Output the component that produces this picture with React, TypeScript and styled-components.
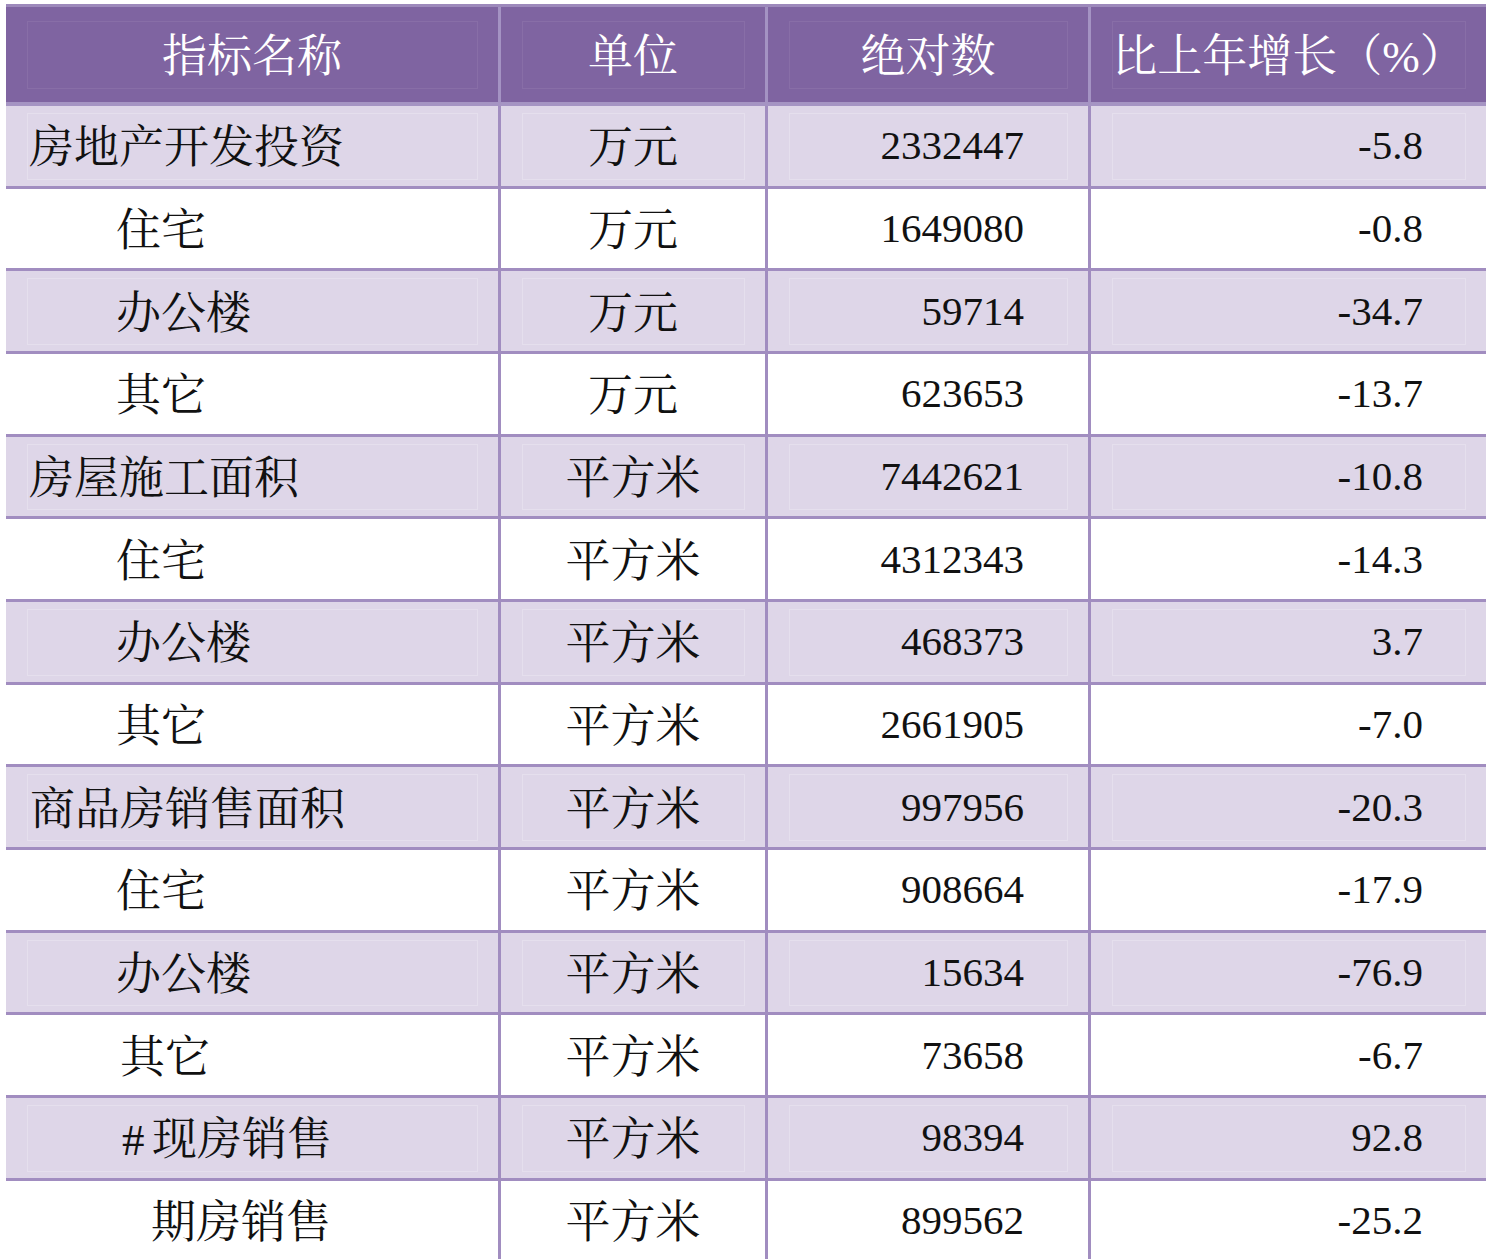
import React from "react";
import styled, { createGlobalStyle, css } from "styled-components";

const GlobalStyle = createGlobalStyle`
  html, body {
    margin: 0;
    padding: 0;
    background: #ffffff;
    overflow: hidden;
  }
  body {
    font-family: "Liberation Serif", "Noto Serif CJK SC", "Noto Sans CJK SC", serif;
    color: #111;
  }
`;

const COLS = "495px 267px 323px 1fr";

const Page = styled.div`
  padding: 4px 0 0 6px;
`;

const Table = styled.div`
  display: flex;
  flex-direction: column;
  width: 1480px;
`;

const HeaderRow = styled.div`
  display: grid;
  grid-template-columns: ${COLS};
  height: 102px;
  box-sizing: border-box;
  border-top: 3px solid #9d89bb;
  border-bottom: 4px solid #a594c3;
  background: #7f64a1;
`;

const BodyRow = styled.div<{ $shaded: boolean }>`
  display: grid;
  grid-template-columns: ${COLS};
  height: 82.67px;
  box-sizing: border-box;
  border-bottom: 3px solid #a18dc0;
  background: ${(p) => (p.$shaded ? "#ded6e8" : "#ffffff")};
`;

type Align = "left" | "center" | "right";

const Cell = styled.div<{ $align: Align; $indent?: number; $pad?: number; $header?: boolean; $outline?: boolean }>`
  position: relative;
  display: flex;
  align-items: center;
  justify-content: ${(p) =>
    p.$align === "left" ? "flex-start" : p.$align === "right" ? "flex-end" : "center"};
  padding-left: ${(p) => (p.$align === "left" ? `${p.$indent ?? 0}px` : "0")};
  padding-right: ${(p) => (p.$align === "right" ? `${p.$pad ?? 0}px` : "0")};
  box-sizing: border-box;
  border-right: 3px solid ${(p) => (p.$header ? "#a493c3" : "#a18dc0")};
  line-height: 1;
  white-space: nowrap;
  &:last-child {
    border-right: none;
  }
  ${(p) =>
    p.$outline &&
    css`
      &::after {
        content: "";
        position: absolute;
        top: ${p.$header ? 14 : 7}px;
        bottom: ${p.$header ? 13 : 6}px;
        left: 21px;
        right: 20px;
        border: 1px solid rgba(255, 255, 255, ${p.$header ? 0.07 : 0.22});
        pointer-events: none;
      }
    `}
`;

const HeadText = styled.span`
  display: inline-block;
  padding-top: 6px;
  color: #ffffff;
  font-size: 45px;
  position: relative;
  z-index: 1;
`;

const CjkText = styled.span`
  display: inline-block;
  padding-top: 6px;
  color: #111;
  font-size: 45px;
  position: relative;
  z-index: 1;
`;

const Hash = styled.span`
  display: inline-block;
  width: 30px;
`;

const NumText = styled.span`
  color: #111;
  font-size: 41px;
  position: relative;
  z-index: 1;
`;

type Row = { name: string; hash?: boolean; indent: number; unit: string; abs: string; growth: string };

const rows: Row[] = [
  { name: "房地产开发投资", indent: 23, unit: "万元", abs: "2332447", growth: "-5.8" },
  { name: "住宅", indent: 110, unit: "万元", abs: "1649080", growth: "-0.8" },
  { name: "办公楼", indent: 110, unit: "万元", abs: "59714", growth: "-34.7" },
  { name: "其它", indent: 110, unit: "万元", abs: "623653", growth: "-13.7" },
  { name: "房屋施工面积", indent: 23, unit: "平方米", abs: "7442621", growth: "-10.8" },
  { name: "住宅", indent: 110, unit: "平方米", abs: "4312343", growth: "-14.3" },
  { name: "办公楼", indent: 110, unit: "平方米", abs: "468373", growth: "3.7" },
  { name: "其它", indent: 110, unit: "平方米", abs: "2661905", growth: "-7.0" },
  { name: "商品房销售面积", indent: 24, unit: "平方米", abs: "997956", growth: "-20.3" },
  { name: "住宅", indent: 110, unit: "平方米", abs: "908664", growth: "-17.9" },
  { name: "办公楼", indent: 110, unit: "平方米", abs: "15634", growth: "-76.9" },
  { name: "其它", indent: 114, unit: "平方米", abs: "73658", growth: "-6.7" },
  { name: "现房销售", hash: true, indent: 116, unit: "平方米", abs: "98394", growth: "92.8" },
  { name: "期房销售", indent: 145, unit: "平方米", abs: "899562", growth: "-25.2" },
];

export default function App() {
  return (
    <>
      <GlobalStyle />
      <Page>
        <Table>
          <HeaderRow>
            <Cell $align="center" $header $outline>
              <HeadText>指标名称</HeadText>
            </Cell>
            <Cell $align="center" $header $outline>
              <HeadText>单位</HeadText>
            </Cell>
            <Cell $align="center" $header $outline>
              <HeadText>绝对数</HeadText>
            </Cell>
            <Cell $align="center" $header $outline>
              <HeadText>比上年增长（%）</HeadText>
            </Cell>
          </HeaderRow>
          {rows.map((r, i) => {
            const shaded = i % 2 === 0;
            return (
              <BodyRow key={i} $shaded={shaded}>
                <Cell $align="left" $indent={r.indent} $outline={shaded}>
                  <CjkText>
                    {r.hash && <Hash>#</Hash>}
                    {r.name}
                  </CjkText>
                </Cell>
                <Cell $align="center" $outline={shaded}>
                  <CjkText>{r.unit}</CjkText>
                </Cell>
                <Cell $align="right" $pad={64} $outline={shaded}>
                  <NumText>{r.abs}</NumText>
                </Cell>
                <Cell $align="right" $pad={63} $outline={shaded}>
                  <NumText>{r.growth}</NumText>
                </Cell>
              </BodyRow>
            );
          })}
        </Table>
      </Page>
    </>
  );
}
